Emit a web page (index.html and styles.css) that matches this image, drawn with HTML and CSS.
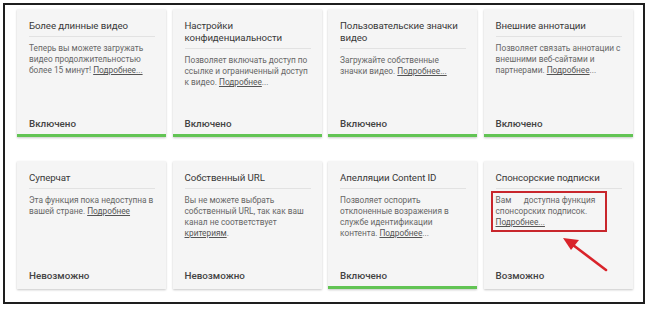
FILE: index.html
```html
<!DOCTYPE html>
<html lang="ru">
<head>
<meta charset="utf-8">
<link rel="stylesheet" href="styles.css">
</head>
<body>
<div class="frame">
  <div class="grid">
    <div class="card on">
      <div class="title">Более длинные видео</div>
      <div class="text">Теперь вы можете загружать<br>видео продолжительностью<br>более 15 минут! <a>Подробнее...</a></div>
      <div class="status">Включено</div>
    </div>
    <div class="card on">
      <div class="title">Настройки<br>конфиденциальности</div>
      <div class="text">Позволяет включать доступ по<br>ссылке и ограниченный доступ<br>к видео. <a>Подробнее</a>...</div>
      <div class="status">Включено</div>
    </div>
    <div class="card on">
      <div class="title">Пользовательские значки<br>видео</div>
      <div class="text">Загружайте собственные<br>значки видео. <a>Подробнее...</a></div>
      <div class="status">Включено</div>
    </div>
    <div class="card on">
      <div class="title">Внешние аннотации</div>
      <div class="text">Позволяет связать аннотации с<br>внешними веб-сайтами и<br>партнерами. <a>Подробнее</a>...</div>
      <div class="status">Включено</div>
    </div>

    <div class="card">
      <div class="title">Суперчат</div>
      <div class="text">Эта функция пока недоступна в<br>вашей стране. <a>Подробнее</a></div>
      <div class="status">Невозможно</div>
    </div>
    <div class="card">
      <div class="title">Собственный URL</div>
      <div class="text">Вы не можете выбрать<br>собственный URL, так как ваш<br>канал не соответствует<br><a>критериям</a>.</div>
      <div class="status">Невозможно</div>
    </div>
    <div class="card on">
      <div class="title">Апелляции Content ID</div>
      <div class="text">Позволяет оспорить<br>отклоненные возражения в<br>службе идентификации<br>контента. <a>Подробнее</a>...</div>
      <div class="status">Включено</div>
    </div>
    <div class="card marked">
      <div class="title">Спонсорские подписки</div>
      <div class="text boxed">Вам&nbsp;&nbsp;&nbsp;&nbsp;&nbsp;&nbsp;доступна функция<br>спонсорских подписок.<br><a>Подробнее...</a></div>
      <div class="status">Возможно</div>
      <svg class="arrow" width="60" height="45" viewBox="0 0 60 45">
        <line x1="49" y1="40" x2="16" y2="15" stroke="#d9232a" stroke-width="2.6" stroke-linecap="round"/>
        <polygon points="6,8 22,10 14,20" fill="#d9232a"/>
      </svg>
    </div>
  </div>
</div>
</body>
</html>
```

FILE: styles.css
```css
html, body {
  margin: 0;
  padding: 0;
  background: #ffffff;
}
body {
  padding: 3px;
  font-family: Roboto, "Noto Sans", "Liberation Sans", sans-serif;
}
.frame {
  width: 626px;
  height: 293px;
  border: 2px solid #1e1e1e;
  padding: 4px 0 0 12px;
  box-sizing: content-box;
}
.grid {
  display: grid;
  grid-template-columns: repeat(4, 149px);
  grid-auto-rows: 128px;
  column-gap: 6.5px;
  row-gap: 24px;
}
.card {
  position: relative;
  background: #f5f5f5;
  box-shadow: 0 1px 2px rgba(0, 0, 0, 0.22);
  padding: 11px 11px 0 12px;
  display: flex;
  flex-direction: column;
  box-sizing: border-box;
}
.card.on {
  border-bottom: 3px solid #62c454;
}
.title {
  font-size: 9.7px;
  line-height: 12px;
  letter-spacing: -0.1px;
  color: #383838;
  padding-bottom: 4px;
  border-bottom: 1px solid #e2e2e2;
}
.text {
  margin-top: 6px;
  font-size: 8.3px;
  line-height: 11px;
  color: #666666;
}
.text a {
  color: #555555;
  text-decoration: underline;
}
.status {
  margin-top: auto;
  margin-bottom: 4px;
  font-size: 9.8px;
  line-height: 13px;
  font-weight: 500;
  color: #444444;
}
.card:not(.on) .status {
  margin-bottom: 7px;
}
.boxed {
  margin-top: 2px;
  margin-left: -5px;
  width: 116px;
  box-sizing: border-box;
  border: 2px solid #c8262c;
  padding: 2px 3px 2px 3px;
}
.arrow {
  position: absolute;
  left: 73px;
  top: 69px;
}
```
